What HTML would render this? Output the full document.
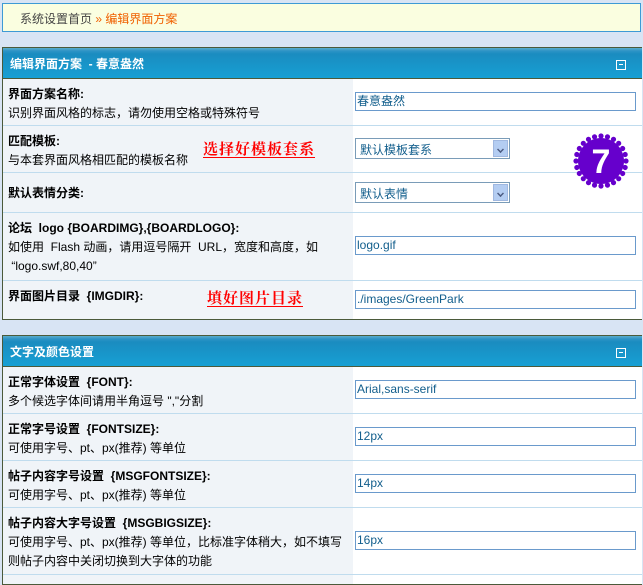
<!DOCTYPE html>
<html><head><meta charset="utf-8"><style>
*{margin:0;padding:0;box-sizing:border-box}
body{width:643px;height:580px;overflow:hidden;background:#d8e4f4;font-family:"Liberation Sans","Noto Sans CJK SC",sans-serif;font-size:12px;color:#000;position:relative}
.crumb{position:absolute;left:2px;top:3px;width:639px;height:29px;background:#fafee0;border:1px solid #3d9ad5;padding:6px 0 0 17px;color:#444;font-size:12px}
.crumb span{color:#f06000}
.tbl{position:absolute;left:2px;width:640px;border:1px solid #4b5a3a;border-right:none;background:#fff;overflow:hidden}
.hd{height:31px;background:linear-gradient(#5aaccc 0,#2c93c6 3px,#1a8cc0 6px,#17a0d4 30px);color:#fff;font-weight:bold;padding:7px 0 0 7px;position:relative;border-bottom:1px solid #4b5a3a}
.hd i{position:absolute;right:16px;top:12px;width:10px;height:10px;border:1px solid #fff;}
.hd i:after{content:"";position:absolute;left:2px;top:3px;width:4px;height:1px;background:#fff}
.row{position:relative;border-bottom:1px solid #c0dcee}
.l{position:absolute;left:0;top:0;bottom:0;width:350px;background:#f0f4f8;padding:6px 0 0 5px;line-height:19px}
.l b{display:block}
.inp{position:absolute;left:352px;width:281px;height:19px;border:1px solid #6a9acc;color:#125e8c;padding:1px 0 0 1px;font-size:12px;line-height:15px}
.sel{position:absolute;left:352px;width:155px;height:21px;border:1px solid #7a9cb8;color:#125e8c;padding:2px 0 0 4px}
.sel i{position:absolute;right:1px;top:1px;width:15px;height:17px;background:#b4cdf2;border:1px solid #a0b8e0}
.sel i:after{content:"";position:absolute;left:3px;top:5px;width:5px;height:5px;border-right:2px solid #4a5a80;border-bottom:2px solid #4a5a80;transform:rotate(45deg) scale(.7)}
.red{position:absolute;color:#f00;font-weight:bold;font-size:15px;letter-spacing:1px;border-bottom:1px solid #f00;line-height:16px;font-family:"Noto Serif CJK SC",serif}
</style></head><body>
<div class="crumb">系统设置首页 <span>» 编辑界面方案</span></div>

<div class="tbl" style="top:47px;height:273px">
<div class="hd">编辑界面方案 &nbsp;- 春意盎然<i></i></div>
<div class="row" style="height:47px"><div class="l"><b>界面方案名称:</b>识别界面风格的标志，请勿使用空格或特殊符号</div><div class="inp" style="top:13px">春意盎然</div></div>
<div class="row" style="height:47px"><div class="l"><b>匹配模板:</b>与本套界面风格相匹配的模板名称</div><div class="sel" style="top:12px">默认模板套系<i></i></div></div>
<div class="row" style="height:40px"><div class="l" style="padding-top:11px"><b>默认表情分类:</b></div><div class="sel" style="top:9px">默认表情<i></i></div></div>
<div class="row" style="height:68px"><div class="l"><b>论坛 &nbsp;logo {BOARDIMG},{BOARDLOGO}:</b>如使用 &nbsp;Flash 动画，请用逗号隔开 &nbsp;URL，宽度和高度，如<br>&nbsp;“logo.swf,80,40”</div><div class="inp" style="top:23px">logo.gif</div></div>
<div class="row" style="height:40px;border:none"><div class="l"><b>界面图片目录 &nbsp;{IMGDIR}:</b></div><div class="inp" style="top:9px">./images/GreenPark</div></div>
</div>
<div class="red" style="left:203px;top:141px">选择好模板套系</div>
<div class="red" style="left:207px;top:290px">填好图片目录</div>
<svg style="position:absolute;left:573px;top:133px" width="56" height="56" viewBox="0 0 56 56">
<g fill="#6600cc"><circle cx="28" cy="28" r="23"/>
<g id="d"><circle cx="28" cy="3" r="2.6"/><circle cx="28" cy="53" r="2.6"/><circle cx="3" cy="28" r="2.6"/><circle cx="53" cy="28" r="2.6"/></g>
<use href="#d" transform="rotate(15 28 28)"/><use href="#d" transform="rotate(30 28 28)"/><use href="#d" transform="rotate(45 28 28)"/><use href="#d" transform="rotate(60 28 28)"/><use href="#d" transform="rotate(75 28 28)"/></g>
<text x="28" y="40" text-anchor="middle" fill="#fff" font-family="Liberation Sans" font-weight="bold" font-size="34">7</text></svg>

<div class="tbl" style="top:335px;height:250px">
<div class="hd">文字及颜色设置<i></i></div>
<div class="row" style="height:47px"><div class="l"><b>正常字体设置 &nbsp;{FONT}:</b>多个候选字体间请用半角逗号 ","分割</div><div class="inp" style="top:13px">Arial,sans-serif</div></div>
<div class="row" style="height:47px"><div class="l"><b>正常字号设置 &nbsp;{FONTSIZE}:</b>可使用字号、pt、px(推荐) 等单位</div><div class="inp" style="top:13px">12px</div></div>
<div class="row" style="height:47px"><div class="l"><b>帖子内容字号设置 &nbsp;{MSGFONTSIZE}:</b>可使用字号、pt、px(推荐) 等单位</div><div class="inp" style="top:13px">14px</div></div>
<div class="row" style="height:67px"><div class="l"><b>帖子内容大字号设置 &nbsp;{MSGBIGSIZE}:</b>可使用字号、pt、px(推荐) 等单位，比标准字体稍大，如不填写<br>则帖子内容中关闭切换到大字体的功能</div><div class="inp" style="top:23px">16px</div></div>
<div class="row" style="height:20px;border:none"><div class="l"></div></div>
</div>
</body></html>
